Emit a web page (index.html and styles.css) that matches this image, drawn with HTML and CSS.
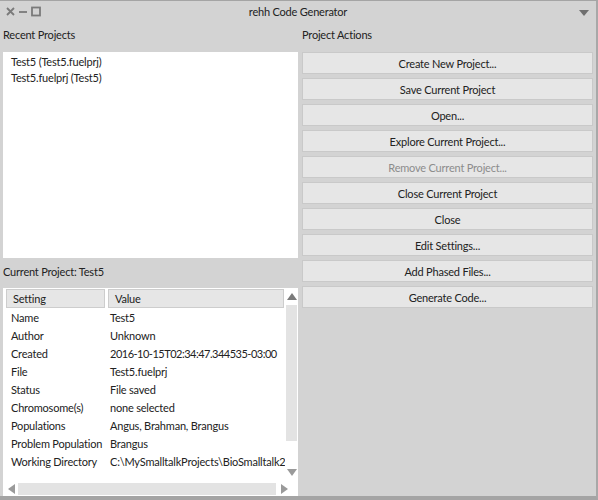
FILE: index.html
```html
<!DOCTYPE html>
<html>
<head>
<meta charset="utf-8">
<link rel="stylesheet" href="styles.css">
</head>
<body>
<div class="window">
  <div class="titlebar">
    <div class="winctl">
      <svg width="38" height="12" viewBox="0 0 38 12">
        <path d="M2 2 L9 9 M9 2 L2 9" stroke="#7a7a7a" stroke-width="1.8"/>
        <path d="M14 6 L22 6" stroke="#7a7a7a" stroke-width="1.8"/>
        <rect x="27" y="1.5" width="8" height="8" fill="none" stroke="#7a7a7a" stroke-width="1.8"/>
      </svg>
    </div>
    <div class="title">rehh Code Generator</div>
    <div class="menuarrow">
      <svg width="10" height="6" viewBox="0 0 10 6"><path d="M0 0 L10 0 L5 6 Z" fill="#6f6f6f"/></svg>
    </div>
  </div>
  <div class="content">
    <div class="leftcol">
      <div class="label">Recent Projects</div>
      <div class="listbox">
        <div class="item">Test5 (Test5.fuelprj)</div>
        <div class="item">Test5.fuelprj (Test5)</div>
      </div>
      <div class="label label2">Current Project: Test5</div>
      <div class="table">
        <div class="tmain">
          <div class="tbody">
            <div class="thead">
              <div class="th c1">Setting</div>
              <div class="th c2">Value</div>
            </div>
            <div class="row"><span class="k">Name</span><span class="v">Test5</span></div>
            <div class="row"><span class="k">Author</span><span class="v">Unknown</span></div>
            <div class="row"><span class="k">Created</span><span class="v tight">2016-10-15T02:34:47.344535-03:00</span></div>
            <div class="row"><span class="k">File</span><span class="v">Test5.fuelprj</span></div>
            <div class="row"><span class="k">Status</span><span class="v">File saved</span></div>
            <div class="row"><span class="k">Chromosome(s)</span><span class="v">none selected</span></div>
            <div class="row"><span class="k">Populations</span><span class="v">Angus, Brahman, Brangus</span></div>
            <div class="row"><span class="k">Problem Population</span><span class="v">Brangus</span></div>
            <div class="row"><span class="k">Working Directory</span><span class="v">C:\MySmalltalkProjects\BioSmalltalk2</span></div>
          </div>
          <div class="vscroll">
            <div class="arrow up"></div>
            <div class="vtrack"></div>
            <div class="arrow down"></div>
          </div>
        </div>
        <div class="hscroll">
          <div class="arrow left"></div>
          <div class="htrack"></div>
          <div class="arrow right"></div>
          <div class="corner"></div>
        </div>
      </div>
    </div>
    <div class="rightcol">
      <div class="label">Project Actions</div>
      <div class="buttons">
        <div class="btn">Create New Project...</div>
        <div class="btn">Save Current Project</div>
        <div class="btn">Open...</div>
        <div class="btn">Explore Current Project...</div>
        <div class="btn disabled">Remove Current Project...</div>
        <div class="btn">Close Current Project</div>
        <div class="btn">Close</div>
        <div class="btn">Edit Settings...</div>
        <div class="btn">Add Phased Files...</div>
        <div class="btn">Generate Code...</div>
      </div>
    </div>
  </div>
</div>
</body>
</html>
```
FILE: styles.css
```css
* { box-sizing: border-box; }
html, body { margin: 0; padding: 0; }
body {
  width: 598px; height: 500px; overflow: hidden;
  background: #d3d3d3;
  font-family: "Lato", "Liberation Sans", sans-serif;
  font-size: 11px;
  letter-spacing: -0.2px;
  color: #222;
}
.window {
  width: 598px; height: 500px;
  border-top: 1px solid #a4a4a4;
  border-right: 2px solid #a8a8a8;
  border-bottom: 4px solid #a4a4a4;
  display: flex; flex-direction: column;
}
.titlebar {
  height: 21px;
  display: grid; grid-template-columns: 1fr auto 1fr; align-items: center;
  padding: 0 5px;
}
.winctl { display: flex; align-items: center; padding-top: 1px; }
.title { text-align: center; color: #222; }
.menuarrow { justify-self: end; width: 14px; display: flex; justify-content: center; padding-top: 2px; }
.content { flex: 1; display: flex; padding: 0 0 0 3px; }
.leftcol { width: 295px; display: flex; flex-direction: column; }
.rightcol { flex: 1; padding-left: 4px; padding-right: 3px; display: flex; flex-direction: column; }
.label { height: 30px; line-height: 25px; color: #222; }
.listbox { background: #fff; height: 206px; padding: 2px 8px; }
.item { height: 16px; line-height: 16px; }
.label2 { height: 30px; line-height: 28px; }
.table { flex: 1; background: #fff; display: flex; flex-direction: column; }
.tmain { flex: 1; display: flex; }
.tbody { flex: 1; padding: 1px 0 0 3px; overflow: hidden; }
.thead { display: flex; height: 19px; margin-bottom: 1px; }
.th { background: #e6e6e6; border: 1px solid #cdcdcd; line-height: 17px; padding-left: 6px; }
.c1 { width: 99px; margin-right: 3px; }
.c2 { width: 176px; }
.row { height: 18px; line-height: 18px; display: flex; white-space: nowrap; }
.k { width: 99px; padding-left: 5px; flex: none; }
.v { padding-left: 5px; }
.tight { letter-spacing: -0.5px; }
.vscroll { width: 13px; display: flex; flex-direction: column; align-items: center; }
.vtrack { width: 11px; background: #e3e3e3; height: 136px; margin-top: 5px; }
.arrow { width: 0; height: 0; }
.up { margin-top: 5px; border-left: 5px solid transparent; border-right: 5px solid transparent; border-bottom: 7px solid #7a7a7a; }
.down { margin-top: 28px; border-left: 5px solid transparent; border-right: 5px solid transparent; border-top: 7px solid #9a9a9a; }
.hscroll { height: 14px; display: flex; align-items: center; }
.left { margin-left: 5px; border-top: 5px solid transparent; border-bottom: 5px solid transparent; border-right: 7px solid #9a9a9a; }
.htrack { width: 258px; height: 12px; background: #e3e3e3; margin-left: 3px; }
.right { margin-left: 5px; border-top: 5px solid transparent; border-bottom: 5px solid transparent; border-left: 7px solid #9a9a9a; }
.corner { flex: 1; }
.buttons { display: flex; flex-direction: column; gap: 4px; }
.btn { height: 22px; line-height: 21px; text-align: center; background: #e6e6e6; border: 1px solid #c9c9c9; color: #222; }
.btn.disabled { color: #8c8c8c; }
```
